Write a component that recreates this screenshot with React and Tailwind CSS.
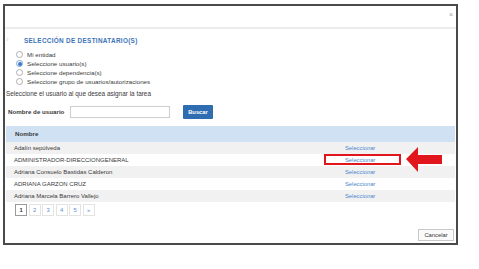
export default function App() {
  const rows = [
    "Adalín sepúlveda",
    "ADMINISTRADOR-DIRECCIONGENERAL",
    "Adriana Consuelo Bastidas Calderon",
    "ADRIANA GARZON CRUZ",
    "Adriana Marcela Barrero Vallejo",
  ];
  const radios = [
    ["Mi entidad", false],
    ["Seleccione usuario(s)", true],
    ["Seleccione dependencia(s)", false],
    ["Seleccione grupo de usuarios/autorizaciones", false],
  ];
  return (
    <div className="relative w-[479px] h-[269px] bg-white overflow-hidden" style={{ fontFamily: '"Liberation Sans", Arial, sans-serif' }}>
      <div className="relative ml-[3px] mt-[4px] w-[455px] h-[241px] border-2 border-[#4a4a4a] flex flex-col">
        {/* header */}
        <div className="h-[23px] border-b-2 border-[#ececec] flex justify-end items-start pr-[3px] pt-[5px] shrink-0">
          <span className="text-[7px] leading-[7px] text-[#9aa4b0]">×</span>
        </div>
        {/* title */}
        <div className="relative mt-[7px] h-[9px] flex items-center pl-[19px]">
          <span className="absolute left-[1px] top-[0px] text-[8px] leading-[8px] text-[#d8d8d8]">›</span>
          <span className="text-[6.4px] leading-[8px] font-bold text-[#3d74b8] tracking-[0.3px]">SELECCIÓN DE DESTINATARIO(S)</span>
        </div>
        {/* radios */}
        <div className="mt-[5px] flex flex-col pl-[11px]">
          {radios.map(([label, on]) => (
            <div key={label} className="h-[9px] flex items-center gap-[4px]">
              <span className={"w-[7px] h-[7px] rounded-full border flex items-center justify-center " + (on ? "border-[#7ea6d6] bg-white" : "border-[#b0b0b0] bg-white")}>
                {on && <span className="w-[4px] h-[4px] rounded-full bg-[#3b78c9]" />}
              </span>
              <span className="text-[6.2px] leading-[8px] text-[#3a3a3a]">{label}</span>
            </div>
          ))}
        </div>
        <div className="mt-[3px] pl-[1px] h-[9px] flex items-center text-[6.4px] text-[#3a3a3a]">
          Seleccione el usuario al que desea asignar la tarea
        </div>
        {/* search */}
        <div className="mt-[7px] h-[14px] flex items-center pl-[3px]">
          <span className="text-[6.2px] font-bold text-[#3a3a3a] w-[62px]">Nombre de usuario</span>
          <span className="w-[100px] h-[12px] border border-[#cfcfcf] bg-white" />
          <span className="ml-[13px] w-[30px] h-[14px] bg-[#2f6db3] rounded-[1px] flex items-center justify-center text-[5.8px] font-bold text-white">Buscar</span>
        </div>
        {/* table */}
        <div className="mt-[7px] mx-[1px]">
          <div className="h-[16px] bg-[#cfe1f3] flex items-center pl-[9px] text-[6.2px] font-bold text-[#3a3a3a]">Nombre</div>
          {rows.map((r, i) => (
            <div key={r} className={"h-[12px] flex items-center text-[6px] text-[#3a3a3a] " + (i % 2 === 0 ? "bg-[#f1f1f1]" : "bg-white")}>
              <span className="pl-[8px] w-[339px]">{r}</span>
              <span className="text-[5.8px] text-[#4a86cc]">Seleccionar</span>
            </div>
          ))}
        </div>
        {/* pagination */}
        <div className="mt-[2px] pl-[10px] flex gap-[1.5px] h-[12px]">
          {["1", "2", "3", "4", "5", "»"].map((p, i) => (
            <span key={p} className={"w-[12px] h-[12px] flex items-center justify-center text-[5.8px] border " + (i === 0 ? "border-[#9a9a9a] text-[#333] font-bold" : "border-[#e3e3e3] text-[#5b8fd0]")}>{p}</span>
          ))}
        </div>
        <div className="flex-1" />
        <div className="flex justify-end pr-[2px] pb-[2px]">
          <span className="w-[36px] h-[12px] border border-[#c8c8c8] bg-[#fafafa] flex items-center justify-center text-[5.8px] text-[#333]">Cancelar</span>
        </div>
      </div>
      {/* red highlight box */}
      <div className="absolute left-[324px] top-[154px] w-[77px] h-[11px] border-2 border-[#e0161c]" />
      {/* red arrow */}
      <svg className="absolute left-[405px] top-[145px]" width="38" height="29" viewBox="0 0 38 29">
        <polygon points="1,14 13,2 13,10 37,10 37,19 13,19 13,27" fill="#e0161c" />
      </svg>
    </div>
  );
}
